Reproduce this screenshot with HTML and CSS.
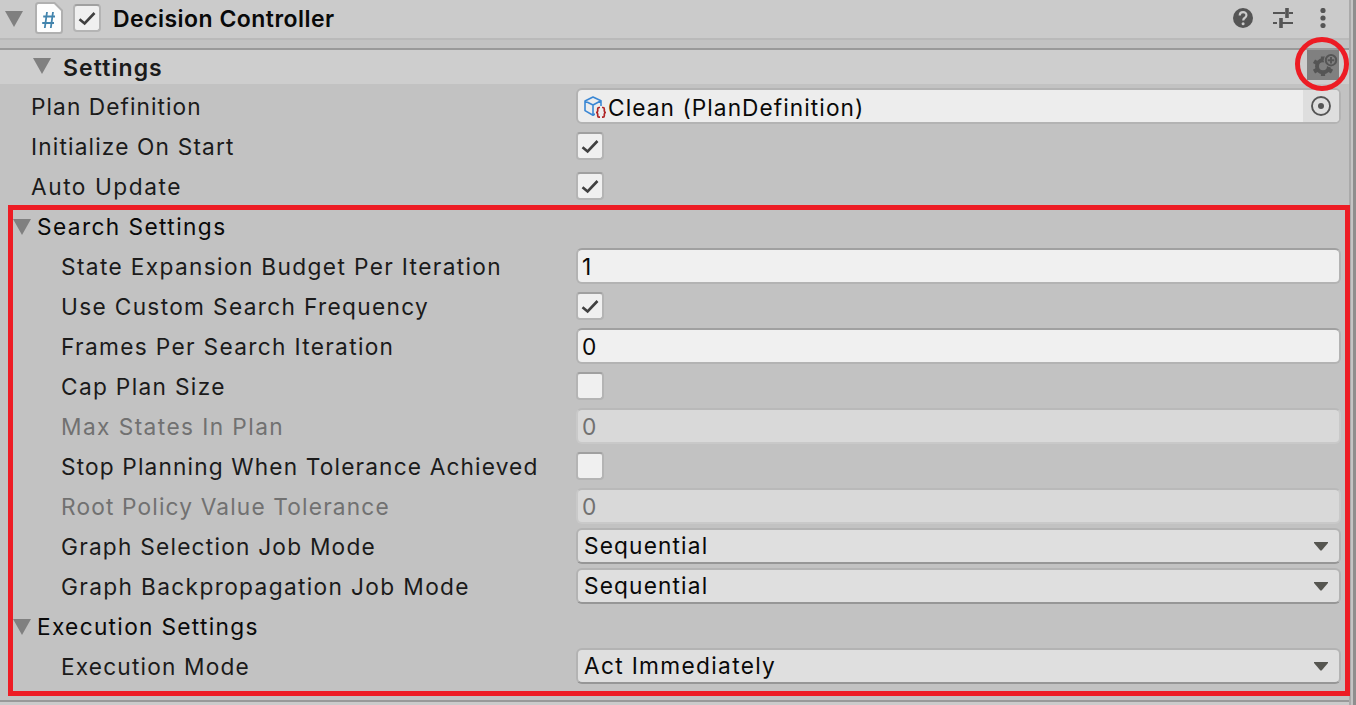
FILE: index.html
```html
<!DOCTYPE html>
<html lang="en">
<head>
<meta charset="utf-8">
<title>Decision Controller</title>
<link rel="stylesheet" href="styles.css">
</head>
<body>
<svg width="0" height="0" class="defs">
  <symbol id="check" viewBox="0 0 28 28"><path d="M6.5 15.2 11.6 19.4 21.5 9" fill="none" stroke="#404040" stroke-width="2.6"/></symbol>
  <symbol id="fold" viewBox="0 0 18 16"><path d="M0 0H18L9 16Z" fill="#808080"/></symbol>
  <symbol id="drop" viewBox="0 0 14 9"><path d="M0 0H14V1L7.6 8.6H6.4L0 1Z" fill="#555550"/></symbol>
</svg>
<div class="window">
  <main class="inspector">
    <header class="component">
      <svg class="fold"><use href="#fold"/></svg>
      <svg class="script" viewBox="0 0 28 32"><path d="M3.5 1H19.5L27 8.5V28.5Q27 31 24.5 31H3.5Q1 31 1 28.5V3.5Q1 1 3.5 1Z" fill="#fdfdfd" stroke="#b0b0b0" stroke-width="2"/><path d="M12 10 9.8 26M18 10 15.8 26M8.2 14.5H20M7.2 21H19" fill="none" stroke="#4284ad" stroke-width="1.8"/></svg>
      <span class="checkbox"><svg><use href="#check"/></svg></span>
      <h1 class="title">Decision Controller</h1>
      <div class="actions">
        <svg width="20" height="20" viewBox="0 0 20 20"><circle cx="10" cy="10" r="10" fill="#555"/><path d="M6.7 7.5Q6.8 4.2 10.1 4.2T13.4 7.2Q13.4 8.8 11.6 10 10.2 11 10.2 12.6" fill="none" stroke="#cbcbcb" stroke-width="2.2"/><circle cx="10.1" cy="15.8" r="1.5" fill="#cbcbcb"/></svg>
        <svg width="20" height="20" viewBox="0 0 20 20"><path d="M0 5H12M16 5H20M0 15H4M9 15H20" stroke="#555" stroke-width="2"/><path d="M14 0V10M8 10V20" stroke="#555" stroke-width="3.6"/></svg>
        <svg width="20" height="20" viewBox="0 0 20 20"><g fill="#555"><circle cx="10" cy="2.5" r="2.6"/><circle cx="10" cy="10" r="2.6"/><circle cx="10" cy="17.5" r="2.6"/></g></svg>
      </div>
    </header>
    <div class="section">
      <svg class="fold"><use href="#fold"/></svg>
      <h2 class="title">Settings</h2>
      <span class="gear"><svg viewBox="0 0 32 30"><circle cx="16" cy="16.3" r="6" fill="none" stroke="#555" stroke-width="4"/><path d="M16 10V6.5M16 22.5V26M10.4 13.2 7 11.2M10.4 19.6 7 21.6M21.6 19.6 25 21.6" stroke="#555" stroke-width="4.2"/><circle cx="24" cy="10.2" r="7.3" fill="#808080"/><circle cx="24" cy="10.2" r="5.2" fill="none" stroke="#555" stroke-width="2"/><path d="M24 6.9V13.5M20.7 10.2H27.3" stroke="#555" stroke-width="2"/></svg></span>
    </div>
    <div class="rows">
      <div class="row"><span class="label plan-definition">Plan Definition</span>
        <div class="field object">
          <svg class="asset" viewBox="0 0 24 24"><path d="M10 1 18 4.7V14L10 19.3 2 14.6V5ZM2 5 10 9 18 4.7M10 9V19" fill="none" stroke="#3a87d4" stroke-width="1.6" stroke-linejoin="round"/><path d="M12 10H23V23H12Z" fill="#ededed"/><path d="M17 11.5H16Q14.7 11.5 14.7 13V15Q14.7 16.5 13 16.5 14.7 16.5 14.7 18V19.7Q14.7 21.2 16 21.2H17M19 11.5H20Q21.3 11.5 21.3 13V15Q21.3 16.5 23 16.5 21.3 16.5 21.3 18V19.7Q21.3 21.2 20 21.2H19" fill="none" stroke="#b02525" stroke-width="1.7"/></svg>
          <span class="value">Clean (PlanDefinition)</span>
          <span class="picker"><svg width="20" height="20" viewBox="0 0 20 20"><circle cx="10" cy="10" r="9" fill="none" stroke="#555" stroke-width="1.9"/><circle cx="10" cy="10" r="3" fill="#555"/></svg></span>
        </div></div>
      <div class="row"><span class="label initialize">Initialize On Start</span><span class="checkbox"><svg><use href="#check"/></svg></span></div>
      <div class="row"><span class="label auto-update">Auto Update</span><span class="checkbox"><svg><use href="#check"/></svg></span></div>
      <div class="row group"><svg class="fold"><use href="#fold"/></svg><span class="search">Search Settings</span></div>
      <div class="row nested"><span class="label budget">State Expansion Budget Per Iteration</span><div class="field input">1</div></div>
      <div class="row nested"><span class="label frequency">Use Custom Search Frequency</span><span class="checkbox"><svg><use href="#check"/></svg></span></div>
      <div class="row nested"><span class="label frames">Frames Per Search Iteration</span><div class="field input">0</div></div>
      <div class="row nested"><span class="label cap">Cap Plan Size</span><span class="checkbox"></span></div>
      <div class="row nested disabled"><span class="label max-states">Max States In Plan</span><div class="field input">0</div></div>
      <div class="row nested"><span class="label stop">Stop Planning When Tolerance Achieved</span><span class="checkbox"></span></div>
      <div class="row nested disabled"><span class="label root">Root Policy Value Tolerance</span><div class="field input">0</div></div>
      <div class="row nested"><span class="label selection">Graph Selection Job Mode</span><div class="field select"><span>Sequential</span><svg class="drop"><use href="#drop"/></svg></div></div>
      <div class="row nested"><span class="label backprop">Graph Backpropagation Job Mode</span><div class="field select"><span>Sequential</span><svg class="drop"><use href="#drop"/></svg></div></div>
      <div class="row group"><svg class="fold"><use href="#fold"/></svg><span class="execution">Execution Settings</span></div>
      <div class="row nested"><span class="label mode">Execution Mode</span><div class="field select"><span class="act">Act Immediately</span><svg class="drop"><use href="#drop"/></svg></div></div>
    </div>
    <footer class="next"></footer>
  </main>
  <div class="edge"></div>
  <div class="highlight"></div>
  <div class="ring"></div>
</div>
</body>
</html>
```
FILE: styles.css
```css
* { box-sizing: border-box; }
body { margin: 0; background: #c2c2c2; font-family: Inter, sans-serif; font-size: 22.7px; font-weight: 400; letter-spacing: 1.2px; color: #1b1b1b; overflow: hidden; }
svg { display: block; flex: none; }
.defs { position: absolute; }
.window { position: relative; display: flex; width: 1356px; height: 705px; }
.inspector { flex: 1; display: flex; flex-direction: column; }
.edge { width: 7px; background: #8e8e8e; border-left: 2px solid #aaa; box-shadow: inset 2px 0 #c4c4c4; }
.title { margin: 0; font-size: 23px; font-weight: 600; line-height: 34px; letter-spacing: 0.47px; white-space: nowrap; }
.fold { width: 18px; height: 16px; }
.component { display: flex; align-items: center; height: 40px; padding: 0 16px 4px 5px; background: #cbcbcb; border-bottom: 2px solid #bababa; }
.component .title { margin-left: 12px; color: #090909; padding-top: 4px; }
.component .fold { margin-top: 3px; }
.script { width: 28px; height: 32px; margin: 2px 10px 0 12px; }
.component .checkbox { margin-top: 2px; }
.actions { display: flex; gap: 20px; margin-left: auto; padding-top: 2px; }
.section { display: flex; align-items: center; height: 36px; margin-top: 8px; padding: 0 10px 0 33px; border-top: 2px solid #999; background: #cecece; }
.section .fold { margin-top: -2px; }
.section .title { margin-left: 12px; letter-spacing: 1.08px; padding-top: 1px; }
.gear { width: 32px; height: 30px; margin: 0 0 4px auto; background: #808080; }
.gear svg { width: 32px; height: 30px; }
.rows { display: flex; flex-direction: column; padding-top: 2px; }
.row { display: grid; grid-template-columns: 545px 765px; grid-template-rows: 40px; align-items: center; height: 40px; padding-left: 31px; white-space: nowrap; }
.nested { grid-template-columns: 515px 765px; padding-left: 61px; }
.group { display: flex; gap: 6px; padding-left: 13px; line-height: 40px; color: #090909; }
.group .fold { margin-top: 1px; }
.label { padding-top: 2px; line-height: 38px; }
.group span { padding-top: 1px; }
.checkbox { display: block; width: 28px; height: 28px; background: #f0f0f0; border: 2px solid #b4b4b4; border-top-color: #a0a0a0; border-radius: 4px; }
.checkbox svg { width: 28px; height: 28px; margin: -2px; }
.field { display: flex; align-items: center; width: 765px; height: 36px; border: 2px solid #b3b3b3; border-radius: 6px; color: #090909; line-height: 32px; overflow: hidden; }
.object { background: #ededed; padding-left: 5px; }
.asset { width: 24px; height: 24px; margin: 4px 1px 0 0; }
.value { padding-top: 4px; letter-spacing: 1.06px; }
.picker { display: flex; align-items: center; justify-content: center; width: 36px; height: 32px; margin-left: auto; background: #dedede; }
.input { padding: 2px 0 0 4px; background: #f0f0f0; border-top-color: #a0a0a0; }
.disabled .label { color: #717171; }
.disabled .field { color: #717171; background: #d9d9d9; border-color: #c9c9c9; border-top-color: #b9b9b9; }
.select { justify-content: space-between; padding: 0 11px 0 6px; background: #dfdfdf; border-color: #b3b3b3; border-bottom-color: #969696; letter-spacing: 1.14px; }
.drop { width: 14px; height: 9px; margin-top: 1px; }
.next { flex: 1; margin-top: 14px; border-top: 2px solid #999; background: #cbcbcb; }
.highlight { position: absolute; left: 8px; top: 205px; width: 1342px; height: 491px; border: 5px solid #ed1c24; }
.ring { position: absolute; left: 1295px; top: 37px; width: 54px; height: 54px; border: 5px solid #ed1c24; border-radius: 50%; }

/* Tracking per caption */
.plan-definition { letter-spacing: 1.06px; }
.initialize { letter-spacing: 1.15px; }
.auto-update { letter-spacing: 1.53px; }
.search { letter-spacing: 1.4px; }
.budget { letter-spacing: 1.35px; }
.frequency { letter-spacing: 1.32px; }
.frames { letter-spacing: 1.32px; }
.cap { letter-spacing: 1.32px; }
.max-states { letter-spacing: 1.42px; }
.stop { letter-spacing: 1.14px; }
.root { letter-spacing: 1.15px; }
.selection { letter-spacing: 1.22px; }
.backprop { letter-spacing: 1.35px; }
.execution { letter-spacing: 1.3px; }
.mode { letter-spacing: 1.16px; }
.act { letter-spacing: 1.32px; }
```
